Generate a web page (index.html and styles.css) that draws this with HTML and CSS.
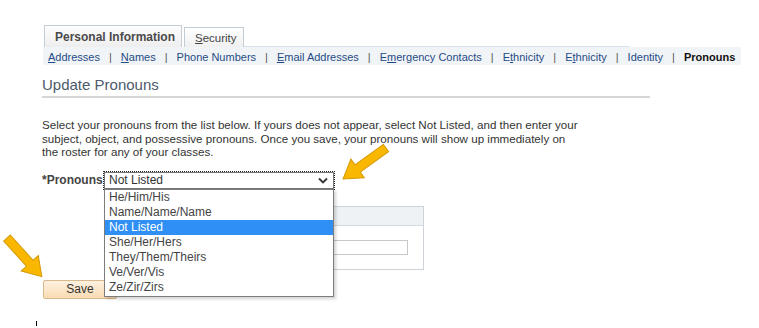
FILE: index.html
```html
<!DOCTYPE html>
<html>
<head>
<meta charset="utf-8">
<link rel="stylesheet" href="styles.css">
</head>
<body>
<div class="page">
  <div class="tabs">
    <div class="tab tab-active">Personal Information</div>
    <div class="tab tab-inactive"><u>S</u>ecurity</div>
    <div class="tab-line"></div>
  </div>
  <div class="subnav">
    <a><u>A</u>ddresses</a><span class="sep">|</span>
    <a><u>N</u>ames</a><span class="sep">|</span>
    <a>Phone Numbers</a><span class="sep">|</span>
    <a><u>E</u>mail Addresses</a><span class="sep">|</span>
    <a>E<u>m</u>ergency Contacts</a><span class="sep">|</span>
    <a>E<u>t</u>hnicity</a><span class="sep">|</span>
    <a>E<u>t</u>hnicity</a><span class="sep">|</span>
    <a>Identity</a><span class="sep">|</span>
    <b class="current">Pronouns</b>
  </div>
  <h1 class="title">Update Pronouns</h1>
  <p class="intro">Select your pronouns from the list below. If yours does not appear, select Not Listed, and then enter your subject, object, and possessive pronouns. Once you save, your pronouns will show up immediately on the roster for any of your classes.</p>
  <div class="field-row">
    <span class="label">*Pronouns</span>
    <div class="select-wrap">
      <div class="select">
        <span>Not Listed</span>
        <svg class="chev" width="10" height="7" viewBox="0 0 10 7"><path d="M1 1.5 L5 5.5 L9 1.5" fill="none" stroke="#333" stroke-width="1.8"/></svg>
      </div>
      <ul class="dropdown">
        <li>He/Him/His</li>
        <li>Name/Name/Name</li>
        <li class="sel">Not Listed</li>
        <li>She/Her/Hers</li>
        <li>They/Them/Theirs</li>
        <li>Ve/Ver/Vis</li>
        <li>Ze/Zir/Zirs</li>
      </ul>
    </div>
  </div>
  <div class="grid-box">
    <div class="grid-head"></div>
    <div class="grid-body"><div class="grid-input"></div></div>
  </div>
  <button class="save">Save</button>
  <div class="cursor"></div>
</div>
<svg class="arrow arrow-1" width="70" height="55" viewBox="0 0 70 55">
  <g transform="translate(58 12) rotate(144.2)">
    <polygon points="0,-4.5 35,-4.5 35,-11.5 53,0 35,11.5 35,4.5 0,4.5" fill="#f9b700" stroke="#d49a05" stroke-width="1"/>
  </g>
</svg>
<svg class="arrow arrow-2" width="55" height="60" viewBox="0 0 55 60">
  <g transform="translate(7 10) rotate(48)">
    <polygon points="0,-4.5 34,-4.5 34,-11.5 52,0 34,11.5 34,4.5 0,4.5" fill="#f9b700" stroke="#d49a05" stroke-width="1"/>
  </g>
</svg>
</body>
</html>
```
FILE: styles.css
```css
html, body {
  margin: 0;
  padding: 0;
  background: #fff;
}
body {
  font-family: "Liberation Sans", Arial, sans-serif;
  width: 759px;
  height: 328px;
  overflow: hidden;
  position: relative;
}
.page {
  padding: 25px 0 0 42px;
}
.tabs {
  display: flex;
  align-items: flex-end;
  height: 22px;
  margin-left: 2px;
}
.tab {
  box-sizing: border-box;
  border: 1px solid #c4ccd4;
  border-bottom: none;
  background: linear-gradient(#ffffff, #f0f0f0);
  color: #4a4a4a;
  font-size: 12px;
  white-space: nowrap;
}
.tab-active {
  width: 138px;
  height: 22px;
  font-weight: bold;
  padding: 4px 0 0 10px;
  background: linear-gradient(#fdfdfd, #eeeeee);
}
.tab-inactive {
  width: 60px;
  height: 20px;
  margin-left: 2px;
  padding: 4px 0 0 10px;
  font-size: 11.5px;
  color: #444;
}
.tab-line {
  width: 386px;
  height: 1px;
  background: #d6e1ec;
}
.subnav {
  display: flex;
  align-items: center;
  height: 18px;
  width: 698px;
  margin-left: 1px;
  padding: 1px 0 0 5px;
  box-sizing: border-box;
  background: #f1f4f6;
  font-size: 11px;
  color: #1f4b86;
  white-space: nowrap;
}
.subnav a,
.subnav b,
.subnav .sep {
  flex-shrink: 0;
}
.subnav a {
  color: #1f4b86;
}
.subnav .sep {
  margin: 0 9px;
  color: #555;
}
.subnav .current {
  color: #111;
  font-weight: bold;
}
.title {
  margin: 11px 0 0 0;
  width: 608px;
  font-size: 15px;
  font-weight: normal;
  color: #4d5a6a;
  padding-bottom: 2px;
  border-bottom: 2px solid #d6d6d6;
  line-height: 18px;
}
.intro {
  margin: 20px 0 0 0;
  width: 541px;
  font-size: 11.6px;
  line-height: 13.5px;
  color: #333;
}
.field-row {
  display: flex;
  align-items: center;
  margin-top: 13px;
  height: 17px;
}
.label {
  font-size: 12px;
  font-weight: bold;
  color: #444;
  width: 62px;
  white-space: nowrap;
}
.select-wrap {
  position: relative;
  z-index: 2;
}
.select {
  box-sizing: border-box;
  width: 230px;
  height: 17px;
  border: 1px solid #767676;
  outline: 1px dotted #222;
  display: flex;
  align-items: center;
  justify-content: space-between;
  padding: 0 5px 0 4px;
  font-size: 12px;
  color: #333;
  background: #fff;
}
.chev {
  display: block;
}
.dropdown {
  position: absolute;
  top: 17px;
  left: 0;
  margin: 0;
  padding: 0;
  list-style: none;
  width: 230px;
  box-sizing: border-box;
  border: 1px solid #7d7d7d;
  background: #fff;
  box-shadow: 2px 2px 3px rgba(0,0,0,0.18);
  padding-bottom: 1px;
}
.dropdown li {
  height: 15px;
  line-height: 15px;
  font-size: 12px;
  padding-left: 4px;
  color: #444;
}
.dropdown li.sel {
  background: #2f8ff5;
  color: #fff;
}
.grid-box {
  box-sizing: border-box;
  margin: 17px 0 0 230px;
  width: 152px;
  height: 64px;
  border: 1px solid #cdd3d8;
}
.grid-head {
  height: 18px;
  background: #eef2f4;
  border-bottom: 1px solid #d4dadf;
}
.grid-body {
  padding: 14px 0 0 0;
}
.grid-input {
  height: 15px;
  width: 135px;
  box-sizing: border-box;
  border: 1px solid #c8c8c8;
}
.save {
  display: block;
  margin: 10px 0 0 1px;
  width: 74px;
  height: 19px;
  font-family: "Liberation Sans", Arial, sans-serif;
  font-size: 12px;
  color: #333;
  border: 1px solid #d8b98e;
  border-radius: 2px;
  background: linear-gradient(#fdf1df, #f9dcb4);
  padding: 0;
}
.cursor {
  width: 1px;
  height: 5px;
  background: #000;
  margin: 22px 0 0 -6px;
}
.arrow {
  position: absolute;
}
.arrow-1 {
  left: 328px;
  top: 136px;
  z-index: 3;
}
.arrow-2 {
  left: 0;
  top: 228px;
  z-index: 3;
}
```
